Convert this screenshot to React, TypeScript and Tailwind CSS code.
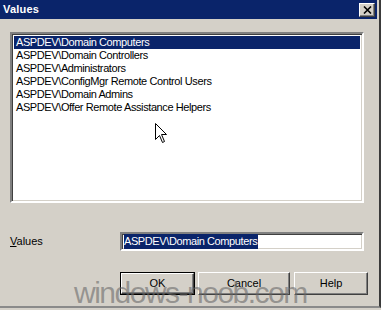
import React from 'react';

const rows = [
  'ASPDEV\\Domain Computers',
  'ASPDEV\\Domain Controllers',
  'ASPDEV\\Administrators',
  'ASPDEV\\ConfigMgr Remote Control Users',
  'ASPDEV\\Domain Admins',
  'ASPDEV\\Offer Remote Assistance Helpers',
];

const sunken =
  'border-2 border-t-[#808080] border-l-[#808080] border-b-white border-r-white shadow-[inset_1px_1px_0_#404040,inset_-1px_-1px_0_#d4d0c8]';

const raised =
  'border border-t-white border-l-white border-b-[#404040] border-r-[#404040] shadow-[inset_-1px_-1px_0_#808080]';

export default function App() {
  return (
    <div className="relative w-[381px] h-[310px] overflow-hidden bg-[#d4d0c8] font-['Liberation_Sans',Arial,sans-serif] text-[11px] text-black">
      <div className="w-[381px] h-[308px] border-r-2 border-b-2 border-r-[#3a3a3a] border-b-[#8a8a8a]">
        {/* Title bar */}
        <div className="w-[377px] h-[19px] bg-[#0a246a] flex items-center justify-between pl-[3px] pr-[2px]">
          <span className="text-white font-bold text-[11px] tracking-[0.2px]">Values</span>
          <div className={`w-[16px] h-[14px] bg-[#d4d0c8] flex items-center justify-center ${raised}`}>
            <svg width="9" height="8" viewBox="0 0 9 8">
              <path d="M1 0.5 L8 7.5 M8 0.5 L1 7.5" stroke="#000" strokeWidth="1.6" />
            </svg>
          </div>
        </div>

        <div className="pl-[10px] pt-[13px]">
          {/* List box */}
          <div className={`w-[354px] h-[171px] bg-white ${sunken} p-[2px]`}>
            {rows.map((r, i) => (
              <div
                key={r}
                className={`h-[13px] leading-[13px] pl-[2px] tracking-[-0.4px] whitespace-nowrap ${i === 0 ? 'bg-[#0a246a] text-white' : ''}`}
              >
                {r}
              </div>
            ))}
          </div>

          {/* Values field */}
          <div className="flex items-center mt-[29px]">
            <span className="w-[110px]">
              <span className="underline">V</span>alues
            </span>
            <div className={`w-[244px] h-[19px] bg-white ${sunken} px-[2px] py-[1px] flex items-center`}>
              <span className="bg-[#0a246a] text-white h-[15px] leading-[15px] pr-[1px] tracking-[-0.4px] whitespace-nowrap">
                ASPDEV\Domain Computers
              </span>
            </div>
          </div>

          {/* Buttons */}
          <div className="flex mt-[21px] ml-[110px]">
            <div className="w-[75px] h-[23px] border border-black">
              <div className={`w-full h-full flex items-center justify-center ${raised}`}>OK</div>
            </div>
            <div className={`w-[92px] h-[23px] ml-[3px] flex items-center justify-center ${raised}`}>Cancel</div>
            <div className={`w-[74px] h-[23px] ml-[4px] flex items-center justify-center ${raised}`}>Help</div>
          </div>
        </div>
      </div>

      {/* Mouse cursor */}
      <svg className="absolute left-[155px] top-[123px]" width="13" height="21" viewBox="0 0 13 21">
        <path
          d="M0.5 0.5 L0.5 16.5 L4.5 12.5 L7.5 19.5 L9.5 18.5 L6.5 11.5 L11.5 11.5 Z"
          fill="#fff"
          stroke="#000"
          strokeWidth="1"
        />
      </svg>

      {/* Watermark */}
      <div className="absolute left-[74px] top-[278px] text-[30px] leading-[30px] tracking-[-1.5px] text-[#6a6a6a]/60 font-['Liberation_Sans',Arial,sans-serif] select-none">
        windows-noob.com
      </div>
    </div>
  );
}
